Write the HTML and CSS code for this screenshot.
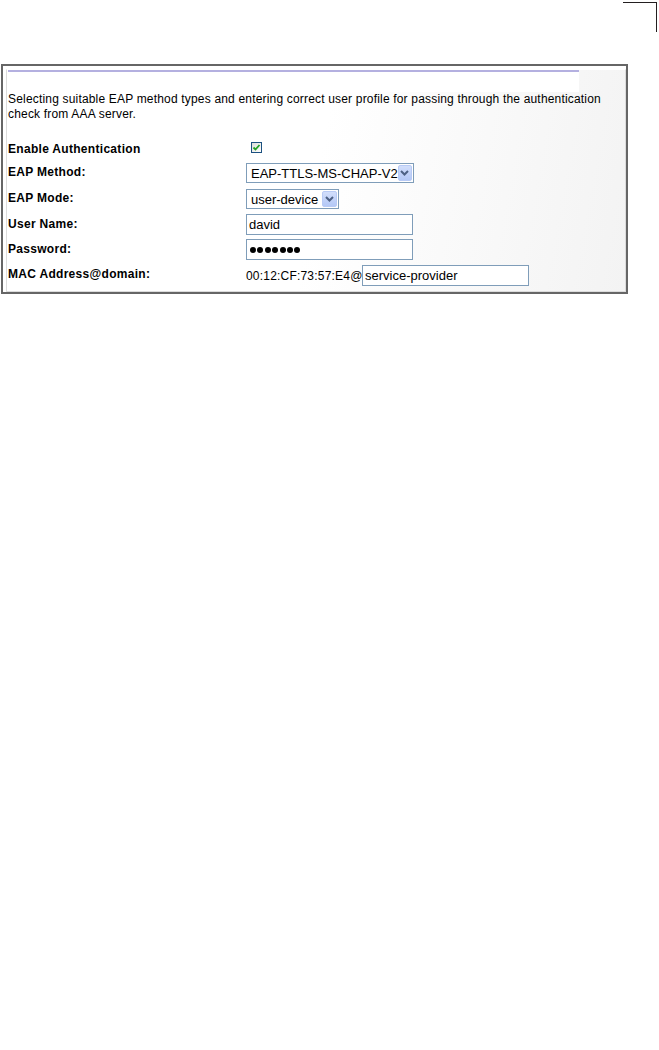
FILE: index.html
```html
<!DOCTYPE html>
<html>
<head>
<meta charset="utf-8">
<link rel="stylesheet" href="styles.css">
</head>
<body>
<div class="page">
  <div class="top">
    <div class="crop-mark"></div>
  </div>
  <div class="frame">
    <div class="inner">
      <div class="header"><div class="rule"></div></div>
      <p class="desc">Selecting suitable EAP method types and entering correct user profile for passing through the authentication check from AAA server.</p>
      <div class="form">
        <div class="row r1">
          <div class="label">Enable Authentication</div>
          <div class="field"><span class="checkbox"><svg width="9" height="9" viewBox="0 0 9 9"><path d="M1.5 4.5 L3.5 6.5 L7.5 2" fill="none" stroke="#21a121" stroke-width="1.8"/></svg></span></div>
        </div>
        <div class="row r2">
          <div class="label">EAP Method:</div>
          <div class="field"><div class="select select-method"><span class="select-text">EAP-TTLS-MS-CHAP-V2</span><span class="arrow"><svg width="9" height="6" viewBox="0 0 9 6"><path d="M1 1 L4.5 4.5 L8 1" fill="none" stroke="#4d6185" stroke-width="2"/></svg></span></div></div>
        </div>
        <div class="row r2">
          <div class="label">EAP Mode:</div>
          <div class="field"><div class="select select-mode"><span class="select-text">user-device</span><span class="arrow"><svg width="9" height="6" viewBox="0 0 9 6"><path d="M1 1 L4.5 4.5 L8 1" fill="none" stroke="#4d6185" stroke-width="2"/></svg></span></div></div>
        </div>
        <div class="row">
          <div class="label">User Name:</div>
          <div class="field"><div class="textbox">david</div></div>
        </div>
        <div class="row">
          <div class="label">Password:</div>
          <div class="field"><div class="textbox dots"><span class="dot"></span><span class="dot"></span><span class="dot"></span><span class="dot"></span><span class="dot"></span><span class="dot"></span><span class="dot"></span></div></div>
        </div>
        <div class="row r6">
          <div class="label">MAC Address@domain:</div>
          <div class="field mac"><span class="mac-text">00:12:CF:73:57:E4@</span><div class="textbox domain">service-provider</div></div>
        </div>
      </div>
    </div>
  </div>
</div>
</body>
</html>
```

FILE: styles.css
```css
html, body {
  margin: 0;
  padding: 0;
  background: #ffffff;
}
.page {
  width: 659px;
  height: 1050px;
  font-family: "Liberation Sans", Arial, sans-serif;
  color: #000;
}
.top {
  height: 64px;
  display: flex;
  justify-content: flex-end;
  align-items: flex-start;
}
.crop-mark {
  margin-top: 2px;
  margin-right: 2px;
  width: 33px;
  height: 29px;
  border-top: 1px solid #231f20;
  border-right: 1px solid #231f20;
}
.frame {
  margin-left: 1px;
  width: 627px;
  height: 230px;
  box-sizing: border-box;
  border: 2px solid #666666;
  padding: 3px 0 0 3px;
}
.inner {
  height: 100%;
  box-sizing: border-box;
  border-left: 1px solid #dcdcdc;
  border-top: 1px solid #ffffff;
  border-right: 1px solid #dcdcdc;
  border-bottom: 1px solid #dcdcdc;
  background: linear-gradient(100deg, #ffffff 0%, #ffffff 50%, #f3f3f3 100%);
}
.header {
  width: 572px;
  height: 22px;
  background: #ffffff;
}
.rule {
  margin-left: 1px;
  width: 571px;
  height: 2px;
  background: #b4b0e0;
}
.desc {
  margin: 0;
  padding-left: 1px;
  font-size: 12px;
  line-height: 15px;
  letter-spacing: 0.18px;
  width: 610px;
}
.form {
  margin-top: 13px;
  padding-left: 1px;
}
.row {
  display: flex;
  align-items: center;
  height: 25px;
}
.r2 {
  height: 26px;
}
.label {
  width: 238px;
  flex: none;
  font-size: 12px;
  line-height: 14px;
  font-weight: bold;
  letter-spacing: 0.3px;
  margin-top: -2px;
}
.r1 .label {
  margin-top: 2px;
}
.field {
  display: flex;
  align-items: center;
}
.checkbox {
  margin-left: 5px;
  width: 11px;
  height: 11px;
  box-sizing: border-box;
  border: 1px solid #1c5180;
  background: linear-gradient(135deg, #dcdcd7, #ffffff);
  display: flex;
  align-items: center;
  justify-content: center;
}
.select {
  height: 20px;
  box-sizing: border-box;
  border: 1px solid #7f9db9;
  background: #fff;
  display: flex;
  align-items: center;
  justify-content: space-between;
  padding: 0 1px 0 4px;
  font-size: 13px;
}
.select-method {
  width: 168px;
}
.select-mode {
  width: 93px;
}
.select-text {
  white-space: nowrap;
}
.arrow {
  width: 15px;
  height: 16px;
  box-sizing: border-box;
  border: 1px solid #b8caf5;
  border-radius: 2px;
  background: linear-gradient(#d2defb, #b4c8f6);
  display: flex;
  align-items: center;
  justify-content: center;
}
.textbox {
  width: 167px;
  height: 21px;
  box-sizing: border-box;
  border: 1px solid #7f9db9;
  background: #fff;
  padding: 0 2px;
  font-size: 13px;
  line-height: 19px;
}
.dots {
  display: flex;
  align-items: center;
  gap: 1.4px;
  padding-left: 3px;
}
.dot {
  width: 6px;
  height: 6px;
  border-radius: 50%;
  background: #000;
}
.r6 .field {
  margin-top: 2px;
}
.mac-text {
  font-size: 12px;
  letter-spacing: 0.2px;
  width: 116px;
  white-space: nowrap;
}
.domain {
  width: 167px;
}
```
